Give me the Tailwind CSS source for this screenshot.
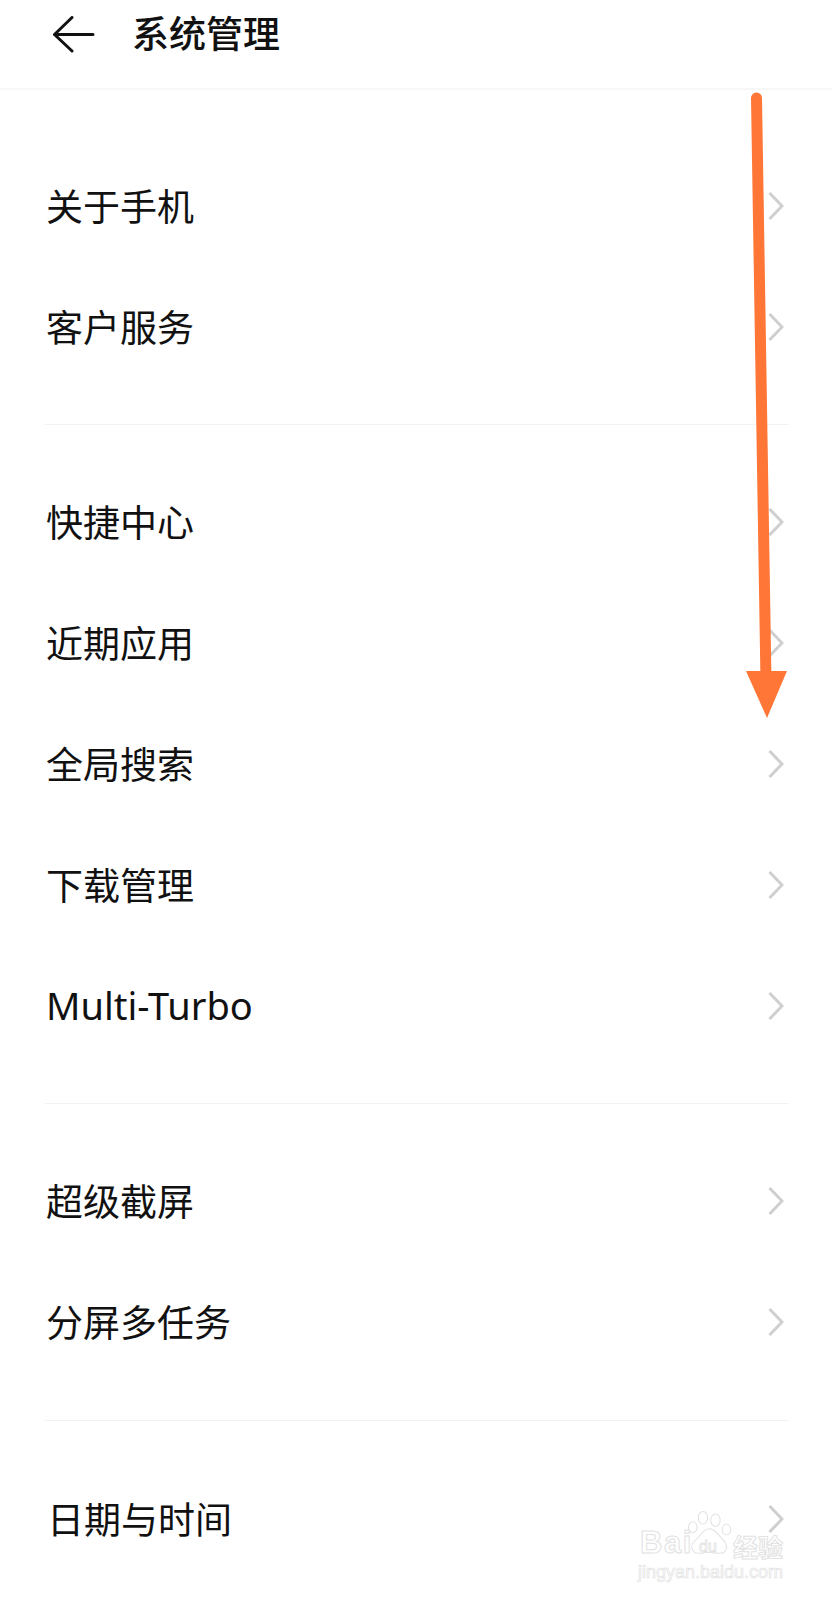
<!DOCTYPE html>
<html lang="zh">
<head>
<meta charset="utf-8">
<script src="https://cdn.jsdelivr.net/npm/@tailwindcss/browser@4"></script>
</head>
<body class="bg-white">
<div class="relative w-[832px] h-[1600px] overflow-hidden bg-white text-[#111] font-['Noto_Sans_CJK_SC','Noto_Sans',sans-serif]">
  <header class="h-[90px] border-b-2 border-[#f7f7f7] flex items-start pt-[7px] pl-[53px]">
    <svg class="w-[42px] h-[38px] mt-[9px]" viewBox="0 0 42 38" fill="none" stroke="#111" stroke-width="3" stroke-linecap="round" stroke-linejoin="round"><path d="M1.500 18.500H40M19 1.500L1.500 18.500L19 35"/></svg>
    <h1 class="ml-[37px] text-[37px] leading-[50px] font-medium">系统管理</h1>
  </header>

  <section class="pt-[55px] pb-[37px] ml-[45px] mr-[43px] border-b border-[#f3f3f3]">
    <div class="h-[121px] flex items-center justify-between text-[37px] pr-[5px]"><span class="pl-[1px]">关于手机</span><svg class="w-[16px] h-[28px]" viewBox="0 0 16 28" fill="none" stroke="#cfcfcf" stroke-width="3"><path d="M1.500 1L14 14L1.500 27"/></svg></div>
    <div class="h-[121px] flex items-center justify-between text-[37px] pr-[5px]"><span class="pl-[1px]">客户服务</span><svg class="w-[16px] h-[28px]" viewBox="0 0 16 28" fill="none" stroke="#cfcfcf" stroke-width="3"><path d="M1.500 1L14 14L1.500 27"/></svg></div>
  </section>

  <section class="pt-[36px] pb-[37px] ml-[45px] mr-[43px] border-b border-[#f3f3f3]">
    <div class="h-[121px] flex items-center justify-between text-[37px] pr-[5px]"><span class="pl-[1px]">快捷中心</span><svg class="w-[16px] h-[28px]" viewBox="0 0 16 28" fill="none" stroke="#cfcfcf" stroke-width="3"><path d="M1.500 1L14 14L1.500 27"/></svg></div>
    <div class="h-[121px] flex items-center justify-between text-[37px] pr-[5px]"><span class="pl-[1px]">近期应用</span><svg class="w-[16px] h-[28px]" viewBox="0 0 16 28" fill="none" stroke="#cfcfcf" stroke-width="3"><path d="M1.500 1L14 14L1.500 27"/></svg></div>
    <div class="h-[121px] flex items-center justify-between text-[37px] pr-[5px]"><span class="pl-[1px]">全局搜索</span><svg class="w-[16px] h-[28px]" viewBox="0 0 16 28" fill="none" stroke="#cfcfcf" stroke-width="3"><path d="M1.500 1L14 14L1.500 27"/></svg></div>
    <div class="h-[121px] flex items-center justify-between text-[37px] pr-[5px]"><span class="pl-[1px]">下载管理</span><svg class="w-[16px] h-[28px]" viewBox="0 0 16 28" fill="none" stroke="#cfcfcf" stroke-width="3"><path d="M1.500 1L14 14L1.500 27"/></svg></div>
    <div class="h-[121px] flex items-center justify-between text-[37px] pr-[5px]"><span class="pl-[1px] text-[38px] font-['Noto_Sans',sans-serif]">Multi-Turbo</span><svg class="w-[16px] h-[28px]" viewBox="0 0 16 28" fill="none" stroke="#cfcfcf" stroke-width="3"><path d="M1.500 1L14 14L1.500 27"/></svg></div>
  </section>

  <section class="pt-[36px] pb-[38px] ml-[45px] mr-[43px] border-b border-[#f3f3f3]">
    <div class="h-[121px] flex items-center justify-between text-[37px] pr-[5px]"><span class="pl-[1px]">超级截屏</span><svg class="w-[16px] h-[28px]" viewBox="0 0 16 28" fill="none" stroke="#cfcfcf" stroke-width="3"><path d="M1.500 1L14 14L1.500 27"/></svg></div>
    <div class="h-[121px] flex items-center justify-between text-[37px] pr-[5px]"><span class="pl-[1px]">分屏多任务</span><svg class="w-[16px] h-[28px]" viewBox="0 0 16 28" fill="none" stroke="#cfcfcf" stroke-width="3"><path d="M1.500 1L14 14L1.500 27"/></svg></div>
  </section>

  <section class="pt-[37px] ml-[45px] mr-[43px]">
    <div class="h-[121px] flex items-center justify-between text-[37px] pr-[5px]"><span class="pl-[2px]">日期与时间</span><svg class="w-[16px] h-[28px]" viewBox="0 0 16 28" fill="none" stroke="#cfcfcf" stroke-width="3"><path d="M1.500 1L14 14L1.500 27"/></svg></div>
  </section>

  <!-- orange annotation arrow -->
  <svg class="absolute left-[730px] top-[92px] w-[62px] h-[640px]" viewBox="0 0 62 640">
    <path d="M26.500 6L36 590" stroke="#ff7637" stroke-width="11" stroke-linecap="round" fill="none"/>
    <path d="M16 579H57L37 626Z" fill="#ff7637"/>
  </svg>

  <!-- watermark -->
  <div class="absolute left-[636px] top-[1510px] w-[160px] h-[80px] text-white">
    <svg class="absolute left-[52px] top-0 w-[44px] h-[47px]" viewBox="3 0 56 60" fill="none" stroke="#e2e2e2" stroke-width="1.300">
      <ellipse cx="22" cy="10" rx="6" ry="8"/>
      <ellipse cx="38" cy="13" rx="6" ry="8"/>
      <ellipse cx="9" cy="22" rx="5.500" ry="7"/>
      <ellipse cx="52" cy="25" rx="5.500" ry="7"/>
      <path d="M30 24C23 24 20 31 15 36C8 42 5 47 10 53C15 58 22 54 30 54C38 54 45 58 50 53C55 47 51 41 45 35C40 30 37 24 30 24Z"/>
    </svg>
    <span class="absolute left-[4px] top-[15px] text-[31px] leading-[36px] tracking-[1.5px] font-bold font-['Liberation_Sans',sans-serif] [-webkit-text-stroke:1px_#e2e2e2]">Bai</span>
    <span class="absolute left-[63px] top-[27px] text-[16px] leading-[20px] font-['Liberation_Sans',sans-serif] [-webkit-text-stroke:0.800px_#e2e2e2]">du</span>
    <span class="absolute left-[97px] top-[20px] text-[25px] leading-[32px] font-bold [-webkit-text-stroke:1px_#e2e2e2]">经验</span>
    <span class="absolute left-[2px] top-[51px] text-[18px] leading-[22px] font-['Liberation_Sans',sans-serif] [-webkit-text-stroke:0.700px_#e2e2e2]">jingyan.baidu.com</span>
  </div>
</div>
</body>
</html>
